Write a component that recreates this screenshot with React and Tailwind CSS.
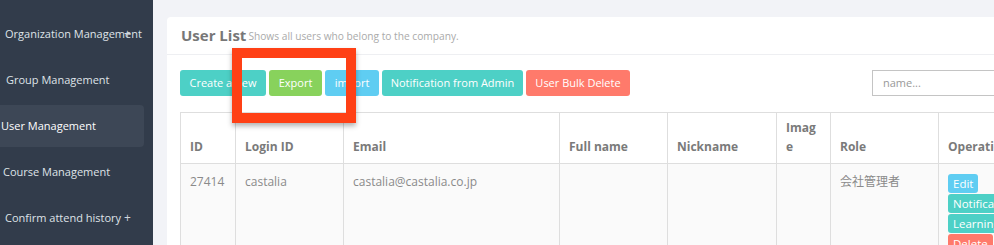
import React from "react";

const menu = [
  { label: "Organization Management", pad: "pl-[5px]", plus: true },
  { label: "Group Management", pad: "pl-[6px]" },
  { label: "User Management", pad: "pl-[1px]", active: true },
  { label: "Course Management", pad: "pl-[3px]" },
  { label: "Confirm attend history", pad: "pl-[5px]", plus: true },
];

const buttons = [
  { label: "Create a new", cls: "bg-[#4dd0c6] w-[86px]" },
  { label: "Export", cls: "bg-[#88d25c] w-[53px]" },
  { label: "import", cls: "bg-[#5fcdf2] w-[54px]" },
  { label: "Notification from Admin", cls: "bg-[#4dd0c6] w-[141px]" },
  { label: "User Bulk Delete", cls: "bg-[#ff7a6b] w-[104px]" },
];

const Sidebar = () => (
  <div className="w-[153px] shrink-0 h-full bg-[#323c4b] pt-[13px] pr-[9px] flex flex-col gap-[4px]">
    {menu.map((item) => (
      <div
        key={item.label}
        className={`relative h-[42px] flex items-center whitespace-nowrap text-[11px] text-[#dfe3e8] rounded-r-[4px] ${item.pad} ${
          item.active ? "bg-[#3d4756] text-white" : ""
        }`}
      >
        {item.label}
        {item.plus && (
          <span className="absolute left-[124px] top-[12px] text-[12px] text-[#cfd5dc]">+</span>
        )}
      </div>
    ))}
  </div>
);

const Th = ({ children, w }) => (
  <th
    className={`${w} border border-[#dedede] px-[9px] pb-[7px] align-bottom text-left font-bold text-[12px] text-[#7a7a7a] leading-[19px]`}
  >
    {children}
  </th>
);

const Td = ({ children }) => (
  <td className="border border-[#dedede] px-[9px] pt-[9px] align-top text-[12px] text-[#8a8a8a] h-[90px]">
    {children}
  </td>
);

export default function App() {
  return (
    <div
      className="w-[994px] h-[245px] overflow-hidden flex bg-[#f2f3f7]"
      style={{ fontFamily: '"Open Sans", "Noto Sans CJK JP", sans-serif' }}
    >
      <Sidebar />
      <div className="pl-[14px] pt-[17px] shrink-0">
        <div className="relative w-[880px] h-[300px] bg-white rounded-tl-[4px]">
          <div className="h-[38px] border-b border-[#eeeff2] pl-[14px] flex items-center gap-[2px]">
            <span className="text-[15px] font-bold text-[#777]">User List</span>
            <span className="text-[10.2px] text-[#aaa] pt-[3px]">Shows all users who belong to the company.</span>
          </div>
          <div className="pl-[13px] pt-[15px]">
            <div className="flex items-center">
              <div className="flex gap-[3px]">
                {buttons.map((b) => (
                  <div
                    key={b.label}
                    className={`${b.cls} h-[26px] rounded-[3px] flex items-center justify-center text-white text-[11px]`}
                  >
                    {b.label}
                  </div>
                ))}
              </div>
              <div className="ml-[242px] w-[150px] h-[26px] border border-[#c4c4c4] pl-[10px] flex items-center text-[11px] text-[#999]">
                name...
              </div>
            </div>
            <table className="mt-[16px] table-fixed border-collapse w-[840px]">
              <thead>
                <tr className="h-[51px]">
                  <Th w="w-[55px]">ID</Th>
                  <Th w="w-[108px]">Login ID</Th>
                  <Th w="w-[216px]">Email</Th>
                  <Th w="w-[108px]">Full name</Th>
                  <Th w="w-[109px]">Nickname</Th>
                  <Th w="w-[54px]">
                    Imag
                    <br />e
                  </Th>
                  <Th w="w-[108px]">Role</Th>
                  <Th w="w-[82px]">Operation</Th>
                </tr>
              </thead>
              <tbody>
                <tr className="bg-[#fafafa]">
                  <Td>27414</Td>
                  <Td>castalia</Td>
                  <Td>castalia@castalia.co.jp</Td>
                  <Td />
                  <Td />
                  <Td />
                  <Td>会社管理者</Td>
                  <td className="border border-[#dedede] pl-[9px] pt-[10px] align-top">
                    <div className="flex flex-col items-start text-[11.5px] text-white leading-[19px]">
                      <span className="bg-[#5fcdf2] rounded-[3px] px-[5px] mb-[1px]">Edit</span>
                      <span className="bg-[#4dd0c6] rounded-[3px] px-[5px] mb-[1px] whitespace-nowrap">Notification</span>
                      <span className="bg-[#4dd0c6] rounded-[3px] px-[5px] mb-[1px] whitespace-nowrap">Learning</span>
                      <span className="bg-[#ff7a6b] rounded-[3px] px-[5px]">Delete</span>
                    </div>
                  </td>
                </tr>
              </tbody>
            </table>
          </div>
          <div className="absolute left-[65px] top-[31px] w-[124px] h-[75px] border-[10px] border-[#ff4015] shadow-[0_3px_5px_rgba(0,0,0,0.3)]" />
        </div>
      </div>
    </div>
  );
}
